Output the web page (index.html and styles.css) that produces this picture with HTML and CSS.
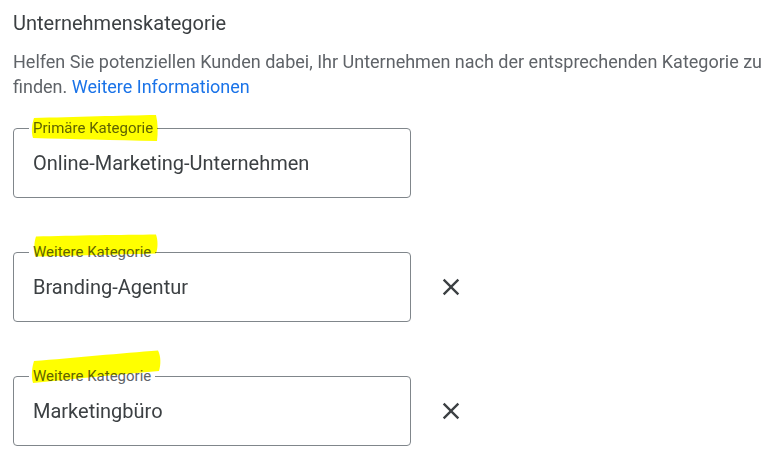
FILE: index.html
```html
<!DOCTYPE html>
<html lang="de">
<head>
<meta charset="utf-8">
<link rel="stylesheet" href="styles.css">
</head>
<body>
<main class="page">
  <h2 class="title">Unternehmenskategorie</h2>
  <p class="desc">Helfen Sie potenziellen Kunden dabei, Ihr Unternehmen nach der entsprechenden Kategorie zu finden. <a class="link" href="#">Weitere Informationen</a></p>
  <div class="fields">
    <div class="row">
      <div class="field">
        <span class="label">Primäre Kategorie</span>
        <span class="value">Online-Marketing-Unternehmen</span>
        <svg class="hl" width="170" height="60" viewBox="0 0 170 60"><path d="M21 20 C60 19 110 17.5 143 17 C145 25 145 35 144 43 C100 42 60 41 20 40 C18 33 19 26 21 20 Z"/></svg>
      </div>
    </div>
    <div class="row">
      <div class="field">
        <span class="label">Weitere Kategorie</span>
        <span class="value">Branding-Agentur</span>
        <svg class="hl" width="170" height="60" viewBox="0 0 170 60"><path d="M23 14.5 C60 13.5 110 12.8 143 12.5 C145 18 145 26 143 31.5 C100 32.5 60 33.5 22 34.5 C21 28 21 20 23 14.5 Z"/></svg>
      </div>
      <button class="remove" aria-label="Entfernen"><svg viewBox="0 0 24 24" width="28" height="28"><path d="M19 6.41L17.59 5 12 10.59 6.41 5 5 6.41 10.59 12 5 17.59 6.41 19 12 13.41 17.59 19 19 17.59 13.41 12z"/></svg></button>
    </div>
    <div class="row">
      <div class="field">
        <span class="label">Weitere Kategorie</span>
        <span class="value">Marketingbüro</span>
        <svg class="hl" width="170" height="60" viewBox="0 0 170 60"><path d="M21 15 C60 12 110 7 145 4.5 C148 10 148 19 146 25 C100 29 60 33 20 37 C18 30 19 21 21 15 Z"/></svg>
      </div>
      <button class="remove" aria-label="Entfernen"><svg viewBox="0 0 24 24" width="28" height="28"><path d="M19 6.41L17.59 5 12 10.59 6.41 5 5 6.41 10.59 12 5 17.59 6.41 19 12 13.41 17.59 19 19 17.59 13.41 12z"/></svg></button>
    </div>
  </div>
</main>
</body>
</html>
```
FILE: styles.css
```css
* { box-sizing: border-box; }
html, body { margin: 0; background: #fff; }
body { font-family: Roboto, "Noto Sans", Arial, sans-serif; }
.page { padding: 10px 13px 0 13px; }
.title {
  margin: 0;
  font-size: 20px;
  font-weight: 400;
  line-height: 26px;
  color: #3c4043;
}
.desc {
  margin: 13px 0 0 0;
  font-size: 18px;
  line-height: 25px;
  color: #5f6368;
}
.link { color: #1a73e8; text-decoration: none; }
.fields {
  margin-top: 29px;
  display: flex;
  flex-direction: column;
  gap: 54px;
}
.row { display: flex; align-items: center; gap: 26px; }
.field {
  position: relative;
  width: 398px;
  height: 70px;
  border: 1px solid #80868b;
  border-radius: 4px;
  padding: 0 19px;
  display: flex;
  align-items: center;
}
.label {
  position: absolute;
  top: -10px;
  left: 15px;
  padding: 0 4px;
  background: #fff;
  font-size: 15px;
  line-height: 18px;
  color: #5f6368;
}
.value {
  font-size: 20px;
  line-height: 24px;
  color: #3c4043;
}
.remove {
  border: 0;
  background: transparent;
  padding: 0;
  width: 28px;
  height: 28px;
  display: flex;
  fill: #3c4043;
}
.hl {
  position: absolute;
  left: -1px;
  top: -31px;
  mix-blend-mode: multiply;
  fill: #ffff00;
  pointer-events: none;
}
```
